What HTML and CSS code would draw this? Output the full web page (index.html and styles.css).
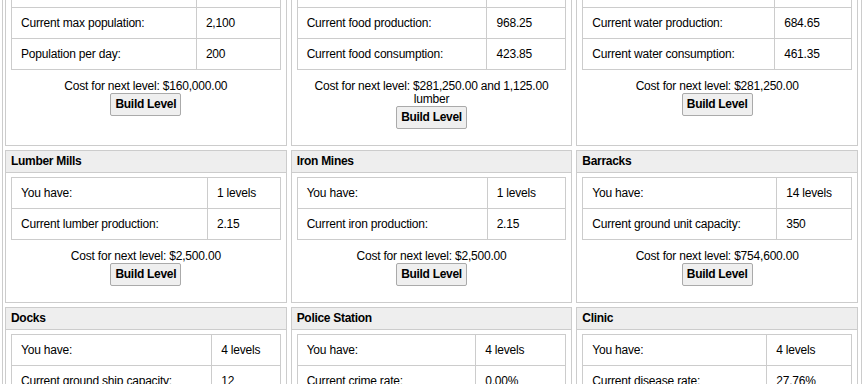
FILE: index.html
```html
<!DOCTYPE html>
<html lang="en">
<head>
  <meta charset="UTF-8" />
  <meta name="viewport" content="width=device-width, initial-scale=1.0" />
  <title>Buildings</title>
  <link rel="stylesheet" href="styles.css">
</head>
<body>
  <div class="page">
    <div class="buildings">

      <div class="building">
        <h3>Houses</h3>
        <table class="stats">
          <tr><td>You have:</td><td>10 levels</td></tr>
          <tr><td>Current max population:</td><td>2,100</td></tr>
          <tr><td>Population per day:</td><td>200</td></tr>
        </table>
        <div class="cost">Cost for next level: $160,000.00</div>
        <button class="build-btn">Build Level</button>
      </div>

      <div class="building">
        <h3>Farms</h3>
        <table class="stats">
          <tr><td>You have:</td><td>10 levels</td></tr>
          <tr><td>Current food production:</td><td>968.25</td></tr>
          <tr><td>Current food consumption:</td><td>423.85</td></tr>
        </table>
        <div class="cost">Cost for next level: $281,250.00 and 1,125.00 lumber</div>
        <button class="build-btn">Build Level</button>
      </div>

      <div class="building">
        <h3>Water Wells</h3>
        <table class="stats">
          <tr><td>You have:</td><td>10 levels</td></tr>
          <tr><td>Current water production:</td><td>684.65</td></tr>
          <tr><td>Current water consumption:</td><td>461.35</td></tr>
        </table>
        <div class="cost">Cost for next level: $281,250.00</div>
        <button class="build-btn">Build Level</button>
      </div>

      <div class="building">
        <h3>Lumber Mills</h3>
        <table class="stats">
          <tr><td>You have:</td><td>1 levels</td></tr>
          <tr><td>Current lumber production:</td><td>2.15</td></tr>
        </table>
        <div class="cost">Cost for next level: $2,500.00</div>
        <button class="build-btn">Build Level</button>
      </div>

      <div class="building">
        <h3>Iron Mines</h3>
        <table class="stats">
          <tr><td>You have:</td><td>1 levels</td></tr>
          <tr><td>Current iron production:</td><td>2.15</td></tr>
        </table>
        <div class="cost">Cost for next level: $2,500.00</div>
        <button class="build-btn">Build Level</button>
      </div>

      <div class="building">
        <h3>Barracks</h3>
        <table class="stats">
          <tr><td>You have:</td><td>14 levels</td></tr>
          <tr><td>Current ground unit capacity:</td><td>350</td></tr>
        </table>
        <div class="cost">Cost for next level: $754,600.00</div>
        <button class="build-btn">Build Level</button>
      </div>

      <div class="building">
        <h3>Docks</h3>
        <table class="stats">
          <tr><td>You have:</td><td>4 levels</td></tr>
          <tr><td>Current ground ship capacity:</td><td>12</td></tr>
        </table>
        <div class="cost">Cost for next level: $40,000.00</div>
        <button class="build-btn">Build Level</button>
      </div>

      <div class="building">
        <h3>Police Station</h3>
        <table class="stats">
          <tr><td>You have:</td><td>4 levels</td></tr>
          <tr><td>Current crime rate:</td><td>0.00%</td></tr>
        </table>
        <div class="cost">Cost for next level: $40,000.00</div>
        <button class="build-btn">Build Level</button>
      </div>

      <div class="building">
        <h3>Clinic</h3>
        <table class="stats">
          <tr><td>You have:</td><td>4 levels</td></tr>
          <tr><td>Current disease rate:</td><td>27.76%</td></tr>
        </table>
        <div class="cost">Cost for next level: $40,000.00</div>
        <button class="build-btn">Build Level</button>
      </div>

    </div>
  </div>
</body>
</html>
```

FILE: styles.css
```css
body {
  margin: 0;
  font-family: "Liberation Sans", Arial, Helvetica, sans-serif;
  font-size: 12px;
  letter-spacing: -0.2px;
  color: #000;
  background: #fff;
}
/* page is shown scrolled: the first row starts above the fold */
.page {
  margin: -51px 2px 0;
  padding: 0 3px 8px 2px;
  border-left: 1px solid #ccc;
  border-right: 1px solid #ccc;
}
.buildings {
  display: grid;
  grid-template-columns: repeat(3, 1fr);
  gap: 4px;
}
.building {
  border: 1px solid #ccc;
  background: #fff;
  padding-bottom: 16px;
}
.building h3 {
  margin: 0;
  height: 21px;
  line-height: 21px;
  padding: 0 5px;
  background: #eee;
  border-bottom: 1px solid #ccc;
  font-size: 12px;
  letter-spacing: -0.3px;
}
.stats {
  border-collapse: collapse;
  width: calc(100% - 10px);
  margin: 4px 5px 0;
}
.stats td {
  border: 1px solid #ccc;
  padding: 7px 9px;
  line-height: 16px;
}
.cost {
  margin: 10px 10px 0;
  text-align: center;
  line-height: 13px;
}
.build-btn {
  display: block;
  margin: 0 auto;
  padding: 3px 4px;
  font: bold 12px/15px "Liberation Sans", Arial, Helvetica, sans-serif;
  letter-spacing: -0.3px;
  color: #000;
  background: #efefef;
  border: 1px solid #aaa;
  border-radius: 2px;
}
```
